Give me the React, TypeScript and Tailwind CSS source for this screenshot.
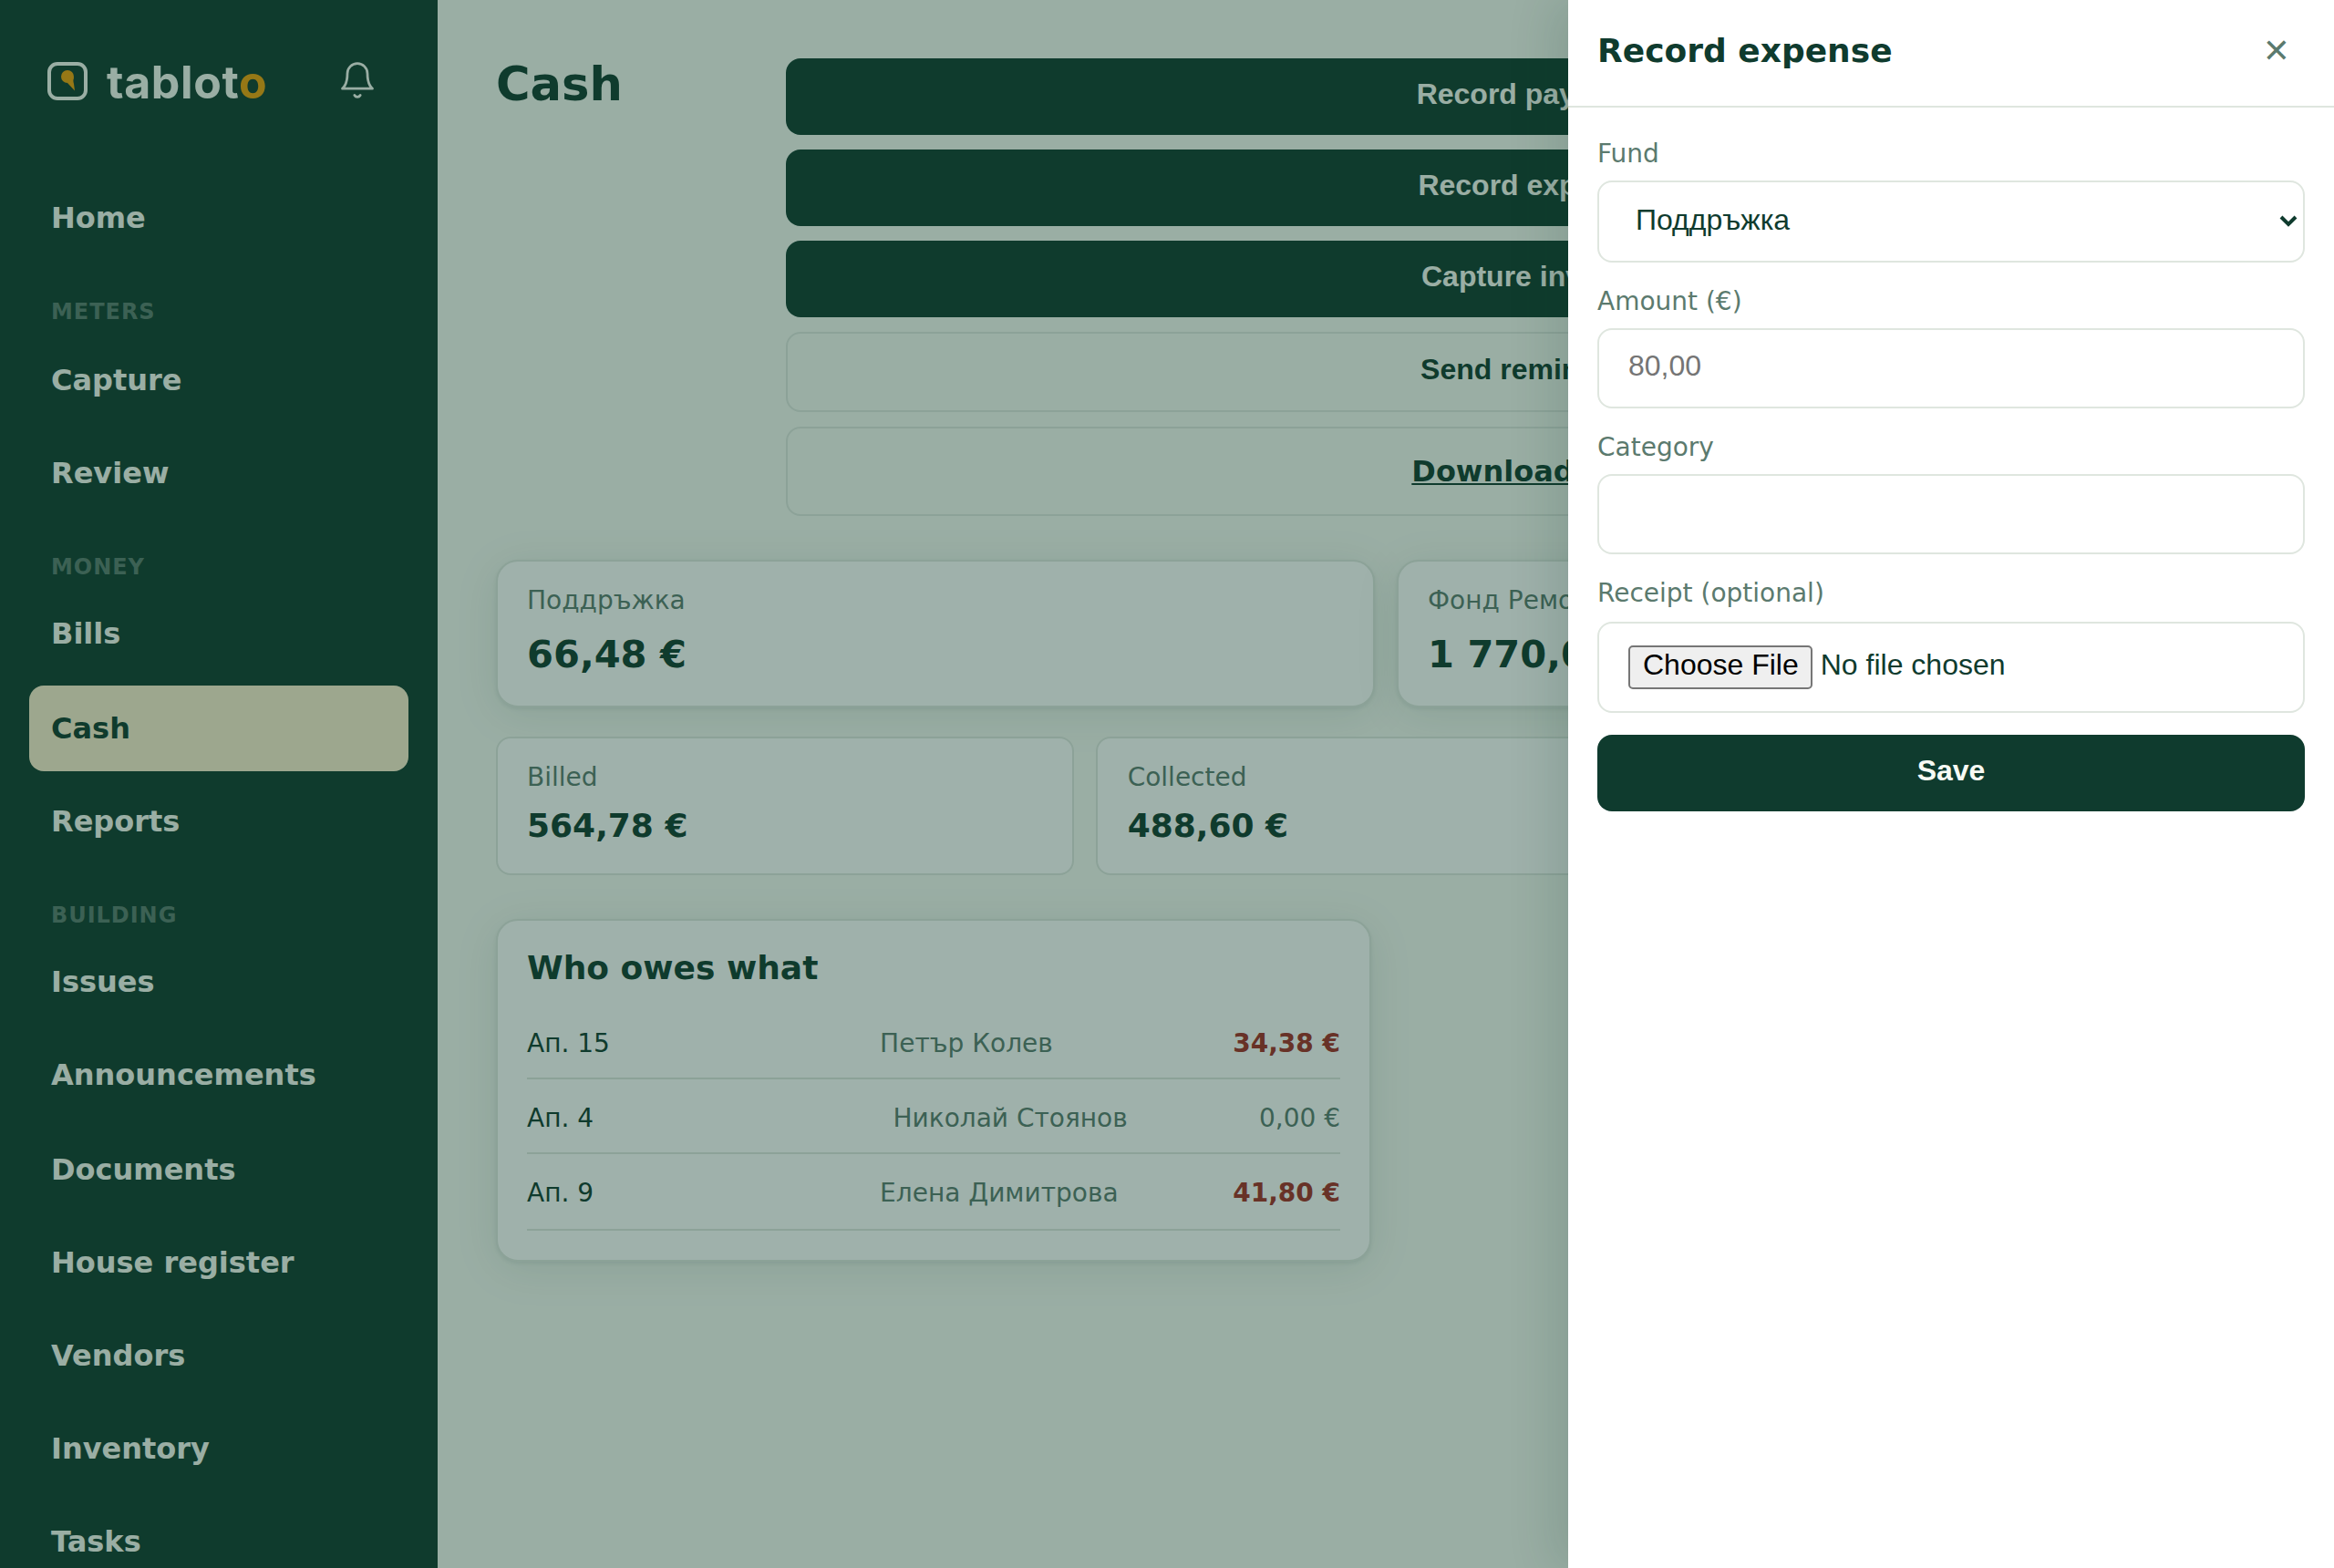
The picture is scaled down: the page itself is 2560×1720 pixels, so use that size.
import { useState } from "react";

type NavGroup = { label?: string; items: string[] };

const NAV: NavGroup[] = [
  { items: ["Home"] },
  { label: "Meters", items: ["Capture", "Review"] },
  { label: "Money", items: ["Bills", "Cash", "Reports"] },
  {
    label: "Building",
    items: ["Issues", "Announcements", "Documents", "House register", "Vendors", "Inventory", "Tasks"],
  },
];

const FUNDS = [
  { name: "Поддръжка", balance: "66,48 €" },
  { name: "Фонд Ремонт", balance: "1 770,00 €" },
];

const TOTALS = [
  { label: "Billed", value: "564,78 €" },
  { label: "Collected", value: "488,60 €" },
  { label: "Outstanding", value: "76,18 €" },
];

const DEBTS = [
  { unit: "Ап. 15", owner: "Петър Колев", amount: "34,38 €", due: true },
  { unit: "Ап. 4", owner: "Николай Стоянов", amount: "0,00 €", due: false },
  { unit: "Ап. 9", owner: "Елена Димитрова", amount: "41,80 €", due: true },
];

const control = "font-['Liberation_Sans',sans-serif] text-base leading-[18px]";
const primaryBtn = `${control} block w-full h-[42px] pt-[11px] pb-[13px] rounded-lg bg-[#0f3b2e] font-bold text-[#f7faf4] text-center`;
const field = `${control} block w-full rounded-lg border border-[#dfe6df] bg-white text-[#0f3b2e]`;
const card = "border border-[#dfe6df] bg-white";
const cardShadow = "rounded-xl shadow-[0_1px_2px_rgba(15,59,46,0.08),0_4px_24px_rgba(15,59,46,0.1)]";

function Logo() {
  return (
    <div className="flex items-center">
      <svg width="22" height="21" viewBox="0 0 44 42" fill="none">
        <rect x="2" y="2" width="40" height="38" rx="9" stroke="#f7faf4" strokeWidth="4" />
        <circle cx="22" cy="16" r="7" fill="#f0a008" />
        <path d="M29 16.500c-.8 2.500-.8 4.500 0 7.500l1 7.500-8-8.500Z" fill="#f0a008" />
      </svg>
      <span className="ml-[10.500px] font-['Inter',sans-serif] text-[25px] leading-[30px] font-bold tracking-[0.32px] text-[#f7faf4]">
        tablot<span className="text-[#f0a008]">o</span>
      </span>
    </div>
  );
}

function Bell() {
  return (
    <svg width="22" height="22" viewBox="0 0 24 24" fill="none" stroke="#f7faf4" strokeWidth="1.5" strokeLinecap="round" strokeLinejoin="round">
      <path d="M18 8A6 6 0 0 0 6 8c0 7-3 9-3 9h18s-3-2-3-9" />
      <path d="M13.730 21a2 2 0 0 1-3.460 0" />
    </svg>
  );
}

function Sidebar() {
  return (
    <aside className="h-full w-60 shrink-0 overflow-hidden bg-[#0f3b2e] px-4">
      <div className="flex h-[96.480px] items-start justify-between pt-[29.500px] pr-[17px] pl-[10px]">
        <Logo />
        <div className="pt-[3.500px]">
          <Bell />
        </div>
      </div>
      <nav>
        {NAV.map((group, i) => (
          <div key={i}>
            {group.label && (
              <div className="h-[37.200px] pt-[15.700px] pl-3 text-xs leading-[17.400px] font-bold tracking-[0.04em] uppercase text-[#5b7a6e]">
                {group.label}
              </div>
            )}
            {group.items.map((item) => (
              <a
                key={item}
                className={`mb-1 block h-[47.200px] rounded-lg p-3 text-base leading-[23.200px] font-bold ${
                  item === "Cash" ? "bg-[#fcefcf] text-[#0f3b2e]" : "text-[#f7faf4]"
                }`}
              >
                {item}
              </a>
            ))}
          </div>
        ))}
      </nav>
    </aside>
  );
}

function CashPage() {
  return (
    <main className="min-w-0 flex-1 px-8 pt-8">
      <div className="flex items-start justify-between">
        <h1 className="text-[25.600px] leading-[28px] font-bold">Cash</h1>
        <div className="flex w-[817px] flex-col gap-2">
          <button className={primaryBtn}>Record payment</button>
          <button className={primaryBtn}>Record expense</button>
          <button className={primaryBtn}>Capture invoice</button>
          <button className={`${control} h-11 rounded-lg border border-[#dfe6df] pt-[11px] pb-[13px] font-bold`}>
            Send reminders
          </button>
          <a className="rounded-lg border border-[#dfe6df] py-3 text-center text-base leading-[23.200px] font-bold underline">
            Download CSV
          </a>
        </div>
      </div>

      <section className="mt-6 grid grid-cols-2 gap-3">
        {FUNDS.map((f) => (
          <div key={f.name} className={`${card} ${cardShadow} px-4 pt-[11px] pb-[13px]`}>
            <div className="text-sm leading-[20.300px] text-[#5b7a6e]">{f.name}</div>
            <div className="mt-1 text-[20.800px] leading-[30.200px] font-bold">{f.balance}</div>
          </div>
        ))}
      </section>

      <section className="mt-4 grid grid-cols-3 gap-3">
        {TOTALS.map((t) => (
          <div key={t.label} className={`${card} rounded-lg px-4 pt-[11px] pb-[13px]`}>
            <div className="text-sm leading-[20.300px] text-[#5b7a6e]">{t.label}</div>
            <div className="mt-1 text-lg leading-[26.100px] font-bold">{t.value}</div>
          </div>
        ))}
      </section>

      <section className={`${card} ${cardShadow} mt-6 w-[480px] px-4 pt-[13px] pb-[16.350px]`}>
        <h2 className="mb-[6.650px] text-lg leading-[26.100px] font-bold">Who owes what</h2>
        {DEBTS.map((d) => (
          <div
            key={d.unit}
            className="grid grid-cols-[1fr_1fr_auto] border-b border-[#dfe6df] pt-[10.800px] pb-[9.200px] text-sm leading-[20.300px]"
          >
            <span>{d.unit}</span>
            <span className="text-[#5b7a6e]">{d.owner}</span>
            <span className={d.due ? "font-bold text-[#a32c24]" : "text-[#5b7a6e]"}>{d.amount}</span>
          </div>
        ))}
      </section>
    </main>
  );
}

function Field({ label, children }: { label: string; children: React.ReactNode }) {
  return (
    <label className="flex flex-col">
      <span className="mb-[6.150px] text-sm leading-[18px] text-[#5b7a6e]">{label}</span>
      {children}
    </label>
  );
}

function ExpenseDrawer({ onClose }: { onClose: () => void }) {
  const [amount, setAmount] = useState("");
  const [category, setCategory] = useState("");

  return (
    <div className="absolute inset-y-0 right-0 w-[420px] bg-white shadow-[-8px_0_24px_rgba(15,59,46,0.14)]">
      <header className="flex h-[59px] items-start justify-between border-b border-[#dfe6df] pt-[14.500px] pr-6 pl-4">
        <h2 className="text-lg leading-[26px] font-bold">Record expense</h2>
        <button type="button" onClick={onClose} className="text-lg leading-[26px] text-[#5b7a6e]">
          ✕
        </button>
      </header>
      <form className="flex flex-col gap-3 p-4">
        <Field label="Fund">
          <select className={`${field} h-[45px] px-4 pb-[2px]`}>
            <option>Поддръжка</option>
          </select>
        </Field>
        <Field label="Amount (€)">
          <input
            className={`${field} h-11 px-4 pt-[11px] pb-[13px] placeholder:text-[#757575]`}
            placeholder="80,00"
            value={amount}
            onChange={(e) => setAmount(e.target.value)}
          />
        </Field>
        <Field label="Category">
          <input className={`${field} h-11 px-4`} value={category} onChange={(e) => setCategory(e.target.value)} />
        </Field>
        <Field label="Receipt (optional)">
          <input
            type="file"
            className={`${field} h-[50px] px-4 py-3 file:mr-1 file:h-6 file:rounded-[2.500px] file:border file:border-solid file:border-[#767676] file:bg-[#efefef] file:px-[7px] file:pt-[1px] file:pb-[3px] file:text-black`}
          />
        </Field>
        <button type="button" className={primaryBtn}>
          Save
        </button>
      </form>
    </div>
  );
}

export default function App() {
  const [open, setOpen] = useState(true);

  return (
    <div className="h-[1720px] w-[2560px] overflow-hidden">
      <div className="relative flex h-[860px] w-[1280px] origin-top-left scale-200 overflow-hidden bg-[#f7faf4] font-['DejaVu_Sans',sans-serif] text-[#0f3b2e]">
        <Sidebar />
        <CashPage />
        {open && (
          <>
            <div className="absolute inset-0 bg-[#0f3b2e]/40" />
            <ExpenseDrawer onClose={() => setOpen(false)} />
          </>
        )}
      </div>
    </div>
  );
}
